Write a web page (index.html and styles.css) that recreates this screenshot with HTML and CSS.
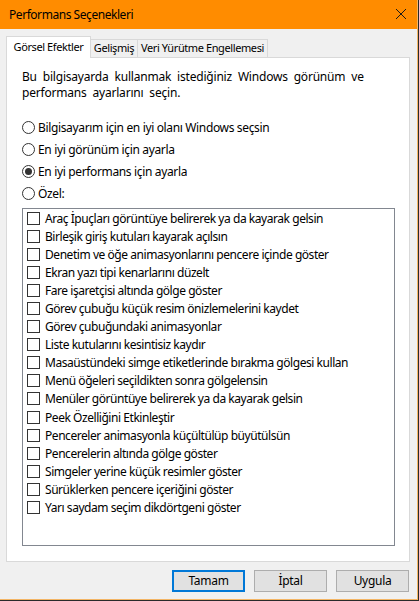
FILE: index.html
```html
<!DOCTYPE html>
<html lang="tr">
<head>
<meta charset="utf-8">
<title>Performans Seçenekleri</title>
<link rel="stylesheet" href="styles.css">
</head>
<body>
<div class="window">
  <div class="titlebar">
    <span class="title">Performans Seçenekleri</span>
    <svg class="close" width="12" height="12" viewBox="0 0 12 12"><path d="M1 1 L11 11 M11 1 L1 11" stroke="#1a1a1a" stroke-width="1" fill="none"/></svg>
  </div>
  <div class="body">
    <div class="tabs">
      <div class="tab active t1">Görsel Efektler</div>
      <div class="tab t2">Gelişmiş</div>
      <div class="tab t3">Veri Yürütme Engellemesi</div>
    </div>
    <div class="panel">
      <p class="intro">Bu bilgisayarda kullanmak istediğiniz Windows görünüm ve performans ayarlarını seçin.</p>
      <div class="radios">
        <div class="radio"><span class="rb"></span>Bilgisayarım için en iyi olanı Windows seçsin</div>
        <div class="radio"><span class="rb"></span>En iyi görünüm için ayarla</div>
        <div class="radio"><span class="rb on"></span>En iyi performans için ayarla</div>
        <div class="radio"><span class="rb"></span>Özel:</div>
      </div>
      <div class="listbox">
        <div class="item"><span class="cb"></span>Araç İpuçları görüntüye belirerek ya da kayarak gelsin</div>
        <div class="item"><span class="cb"></span>Birleşik giriş kutuları kayarak açılsın</div>
        <div class="item"><span class="cb"></span>Denetim ve öğe animasyonlarını pencere içinde göster</div>
        <div class="item"><span class="cb"></span>Ekran yazı tipi kenarlarını düzelt</div>
        <div class="item"><span class="cb"></span>Fare işaretçisi altında gölge göster</div>
        <div class="item"><span class="cb"></span>Görev çubuğu küçük resim önizlemelerini kaydet</div>
        <div class="item"><span class="cb"></span>Görev çubuğundaki animasyonlar</div>
        <div class="item"><span class="cb"></span>Liste kutularını kesintisiz kaydır</div>
        <div class="item"><span class="cb"></span>Masaüstündeki simge etiketlerinde bırakma gölgesi kullan</div>
        <div class="item"><span class="cb"></span>Menü öğeleri seçildikten sonra gölgelensin</div>
        <div class="item"><span class="cb"></span>Menüler görüntüye belirerek ya da kayarak gelsin</div>
        <div class="item"><span class="cb"></span>Peek Özelliğini Etkinleştir</div>
        <div class="item"><span class="cb"></span>Pencereler animasyonla küçültülüp büyütülsün</div>
        <div class="item"><span class="cb"></span>Pencerelerin altında gölge göster</div>
        <div class="item"><span class="cb"></span>Simgeler yerine küçük resimler göster</div>
        <div class="item"><span class="cb"></span>Sürüklerken pencere içeriğini göster</div>
        <div class="item"><span class="cb"></span>Yarı saydam seçim dikdörtgeni göster</div>
      </div>
    </div>
    <div class="buttons">
      <button class="btn default">Tamam</button>
      <button class="btn">İptal</button>
      <button class="btn">Uygula</button>
    </div>
  </div>
</div>
</body>
</html>
```

FILE: styles.css
```css
* { box-sizing: border-box; }
html, body { margin: 0; padding: 0; }
body {
  background: #2a2a2a;
  font-family: "Noto Sans", "Open Sans", sans-serif;
  font-size: 12px;
  letter-spacing: -0.35px;
  color: #000;
  width: 419px;
  height: 601px;
}
.window {
  width: 418px;
  height: 600px;
  background: #f0f0f0;
  border-right: 1px solid #f3b565;
  border-bottom: 1px solid #f3b565;
  display: flex;
  flex-direction: column;
}
.titlebar {
  height: 29px;
  background: #ff8c00;
  display: flex;
  align-items: center;
  justify-content: space-between;
  padding: 0 9px 1px 9px;
  flex-shrink: 0;
}
.title { font-size: 12px; letter-spacing: -0.45px; color: #000; }
.close { margin-right: 1px; }
.body {
  padding: 7px 7px 0 6px;
  display: flex;
  flex-direction: column;
}
.tabs {
  display: flex;
  align-items: flex-end;
  height: 21px;
  position: relative;
  z-index: 1;
}
.tab {
  height: 18px;
  line-height: 16px;
  border: 1px solid #d9d9d9;
  border-bottom: none;
  background: #f0f0f0;
  margin-left: -1px;
  white-space: nowrap;
  text-align: center;
  font-size: 11px;
  letter-spacing: -0.4px;
}
.tab.active {
  height: 22px;
  line-height: 19px;
  background: #fff;
  margin-left: 0;
  margin-bottom: -1px;
}
.t1 { width: 85px; }
.t2 { width: 48px; }
.t3 { width: 131px; }
.panel {
  background: #fff;
  border: 1px solid #d9d9d9;
  width: 404px;
  height: 505px;
  padding: 11px 0 0 15px;
}
.intro {
  margin: 0;
  line-height: 16px;
  width: 375px;
  word-spacing: 3px;
  letter-spacing: -0.2px;
}
.radios {
  margin-top: 15px;
  display: flex;
  flex-direction: column;
}
.radio {
  height: 22px;
  display: flex;
  align-items: center;
}
.rb {
  width: 13px;
  height: 13px;
  border: 1px solid #333;
  border-radius: 50%;
  margin-right: 3px;
  display: inline-flex;
  align-items: center;
  justify-content: center;
  flex-shrink: 0;
}
.rb.on::after {
  content: "";
  width: 7px;
  height: 7px;
  border-radius: 50%;
  background: #333;
}
.listbox {
  margin-top: 4px;
  width: 373px;
  height: 338px;
  border: 1px solid #828790;
  background: #fff;
  padding: 0 0 0 4px;
}
.item {
  height: 18.1px;
  display: flex;
  align-items: center;
  white-space: nowrap;
  letter-spacing: -0.45px;
}
.cb {
  width: 13px;
  height: 13px;
  border: 1px solid #333;
  margin-right: 5px;
  flex-shrink: 0;
  background: #fff;
}
.buttons {
  display: flex;
  justify-content: flex-end;
  gap: 9px;
  margin-top: 8px;
  padding-right: 1px;
}
.btn {
  width: 73px;
  height: 22px;
  background: #e1e1e1;
  border: 1px solid #adadad;
  font-family: inherit;
  font-size: 12px;
  letter-spacing: -0.3px;
  color: #000;
  padding: 0;
  line-height: 18px;
}
.btn.default {
  border: 2px solid #0078d7;
}
```
